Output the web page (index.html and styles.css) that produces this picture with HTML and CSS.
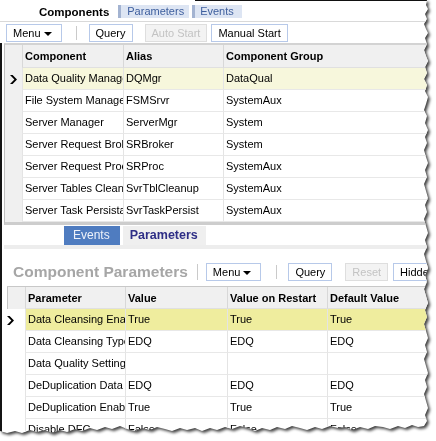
FILE: index.html
```html
<!DOCTYPE html>
<html>
<head>
<meta charset="utf-8">
<link rel="stylesheet" href="styles.css">
</head>
<body>
<div class="wrap">
<div class="sheet">
  <div class="tabs">
    <span class="tab-active">Components</span>
    <span class="tab">Parameters</span>
    <span class="tab tab-ev">Events</span>
  </div>
  <div class="toolbar">
    <span class="btn btn-menu">Menu<i class="caret"></i></span>
    <span class="sep"></span>
    <span class="btn btn-q">Query</span>
    <span class="btn btn-off btn-auto">Auto Start</span>
    <span class="btn">Manual Start</span>
  </div>
  <div class="lower">
    <div class="grid grid1">
      <div class="rh rh-head"></div>
      <div class="c h">Component</div>
      <div class="c h">Alias</div>
      <div class="c h">Component Group</div>

      <div class="rh"><svg class="chev" width="7" height="9" viewBox="0 0 7 9"><polygon points="0,0 2.6,0 7,4.5 2.6,9 0,9 4.4,4.5" fill="#000"/></svg></div>
      <div class="c sel1">Data Quality Manager</div>
      <div class="c sel1">DQMgr</div>
      <div class="c sel1">DataQual</div>

      <div class="rh"></div><div class="c">File System Manager</div><div class="c">FSMSrvr</div><div class="c">SystemAux</div>
      <div class="rh"></div><div class="c">Server Manager</div><div class="c">ServerMgr</div><div class="c">System</div>
      <div class="rh"></div><div class="c">Server Request Broker</div><div class="c">SRBroker</div><div class="c">System</div>
      <div class="rh"></div><div class="c">Server Request Processor</div><div class="c">SRProc</div><div class="c">SystemAux</div>
      <div class="rh"></div><div class="c">Server Tables Cleanup</div><div class="c">SvrTblCleanup</div><div class="c">SystemAux</div>
      <div class="rh"></div><div class="c">Server Task Persistance</div><div class="c">SvrTaskPersist</div><div class="c">SystemAux</div>
    </div>

    <div class="subtabs">
      <span class="st st-ev">Events</span>
      <span class="st st-par">Parameters</span>
    </div>

    <div class="ptitle">
      <span class="ttl">Component Parameters</span>
      <span class="sep sep-t"></span>
      <span class="btn btn-menu">Menu<i class="caret"></i></span>
      <span class="sep sep-2"></span>
      <span class="btn btn-q2">Query</span>
      <span class="btn btn-off btn-reset">Reset</span>
      <span class="btn">Hidden</span>
    </div>

    <div class="grid grid2">
      <div class="rh2 rh2-head"></div>
      <div class="c h">Parameter</div>
      <div class="c h">Value</div>
      <div class="c h">Value on Restart</div>
      <div class="c h">Default Value</div>

      <div class="rh2"><svg class="chev" width="7" height="9" viewBox="0 0 7 9"><polygon points="0,0 2.6,0 7,4.5 2.6,9 0,9 4.4,4.5" fill="#000"/></svg></div>
      <div class="c sel2">Data Cleansing Enabled</div>
      <div class="c sel2">True</div>
      <div class="c sel2">True</div>
      <div class="c sel2">True</div>

      <div class="rh2"></div><div class="c">Data Cleansing Type</div><div class="c">EDQ</div><div class="c">EDQ</div><div class="c">EDQ</div>
      <div class="rh2"></div><div class="c">Data Quality Settings</div><div class="c"></div><div class="c"></div><div class="c"></div>
      <div class="rh2"></div><div class="c">DeDuplication Data Type</div><div class="c">EDQ</div><div class="c">EDQ</div><div class="c">EDQ</div>
      <div class="rh2"></div><div class="c">DeDuplication Enabled</div><div class="c">True</div><div class="c">True</div><div class="c">True</div>
      <div class="rh2"></div><div class="c">Disable DFC</div><div class="c">False</div><div class="c">False</div><div class="c">False</div>
    </div>
  </div>
</div>
</div>
</body>
</html>
```
FILE: styles.css
```css
html, body {
  margin: 0;
  padding: 0;
  background: #fff;
}
body {
  font-family: "Liberation Sans", Arial, sans-serif;
  font-size: 11px;
  color: #000;
}
.wrap {
  width: 436px;
  height: 441px;
  filter: drop-shadow(2px 2px 1.5px rgba(0, 0, 0, 0.75));
}
.sheet {
  width: 436px;
  height: 441px;
  background: #fff;
  overflow: hidden;
  clip-path: polygon(0 0, 427px 0, 426px 5px, 428px 9px, 425px 14px, 427px 19px, 424px 24px, 426px 29px, 428px 33px, 425px 38px, 427px 44px, 424px 50px, 426px 56px, 428px 61px, 425px 67px, 427px 73px, 424px 79px, 427px 85px, 425px 91px, 428px 97px, 426px 104px, 424px 110px, 427px 116px, 425px 123px, 428px 130px, 425px 137px, 427px 143px, 424px 150px, 426px 157px, 428px 163px, 425px 170px, 427px 177px, 424px 184px, 426px 191px, 428px 198px, 425px 205px, 427px 212px, 424px 219px, 426px 226px, 428px 233px, 425px 240px, 427px 247px, 424px 254px, 426px 261px, 428px 268px, 425px 275px, 427px 282px, 424px 289px, 426px 296px, 428px 303px, 425px 310px, 427px 317px, 424px 324px, 426px 331px, 428px 338px, 425px 345px, 427px 352px, 424px 359px, 426px 366px, 428px 373px, 425px 380px, 427px 387px, 424px 394px, 426px 401px, 428px 408px, 425px 415px, 427px 421px, 424px 426px, 418px 427px, 412px 425px, 405px 428px, 398px 426px, 390px 429px, 383px 427px, 375px 426px, 368px 429px, 360px 427px, 352px 430px, 345px 427px, 338px 428px, 330px 426px, 322px 429px, 315px 427px, 307px 430px, 300px 428px, 292px 426px, 285px 429px, 277px 427px, 270px 430px, 262px 428px, 255px 431px, 248px 428px, 240px 426px, 232px 429px, 225px 427px, 217px 430px, 210px 428px, 202px 431px, 195px 428px, 187px 430px, 180px 428px, 172px 431px, 165px 429px, 157px 427px, 150px 430px, 142px 428px, 135px 431px, 127px 429px, 120px 426px, 112px 429px, 105px 427px, 97px 430px, 90px 428px, 82px 431px, 75px 429px, 67px 432px, 60px 430px, 52px 433px, 45px 430px, 37px 432px, 30px 430px, 22px 433px, 15px 431px, 7px 433px, 0 431px);
}

/* top tabs */
.tabs {
  height: 21px;
  border-bottom: 1px solid #d9d9d9;
  display: flex;
  align-items: flex-start;
  padding-left: 39px;
  background: linear-gradient(#111, #111) 195px 0 / 100% 1px no-repeat;
}
.tab-active {
  font-weight: bold;
  font-size: 11.5px;
  line-height: 13px;
  margin-top: 6px;
  margin-right: 9px;
}
.tab {
  margin-top: 5px;
  height: 13px;
  line-height: 13px;
  border-left: 3px solid #a3b3d1;
  background: #dde5f3;
  color: #3e5f9e;
  padding: 0 5px 0 6px;
  margin-right: 3px;
}
.tab-ev {
  padding: 0 8px 0 5px;
}

/* toolbars */
.toolbar {
  height: 21px;
  box-sizing: border-box;
  padding: 2px 0 0 6px;
  display: flex;
  align-items: flex-start;
}
.btn {
  display: inline-flex;
  align-items: center;
  height: 18px;
  box-sizing: border-box;
  border: 1px solid #b7c9e9;
  background: #fff;
  padding: 0 6px;
  font-size: 11px;
  white-space: nowrap;
  flex: none;
}
.btn-menu {
  padding: 0 9px 0 6px;
}
.caret {
  display: inline-block;
  width: 0;
  height: 0;
  border-left: 4px solid transparent;
  border-right: 4px solid transparent;
  border-top: 4px solid #000;
  margin-left: 3px;
  margin-top: 1px;
}
.btn-off {
  background: #f3f3f3;
  border-color: #dedede;
  color: #c3c3c3;
}
.sep {
  width: 1px;
  height: 14px;
  background: #cacaca;
  margin: 2px 12px 0 14px;
  flex: none;
}
.btn-q {
  margin-right: 12px;
}
.btn-auto {
  margin-right: 4px;
}

/* lower part */
.lower {
  border-left: 2px solid #141414;
  padding-left: 2px;
  height: 420px;
}
.grid {
  display: grid;
}
.grid1 {
  border-left: 1px solid #bfbfbf;
  border-top: 2px solid #d3d3d3;
  border-bottom: 3px solid #cdcdcd;
  grid-template-columns: 17px 101px 100px 1fr;
  grid-template-rows: 23px repeat(7, 22px);
}
.c {
  box-sizing: border-box;
  border-left: 1px solid #e4e4e4;
  border-bottom: 1px solid #e8e8e8;
  padding-left: 2px;
  line-height: 21px;
  overflow: hidden;
  white-space: nowrap;
}
.h {
  background: #f0f0f0;
  font-weight: bold;
  border-left-color: #d8d8d8;
  border-bottom-color: #e0e0e0;
  line-height: 22px;
}
.rh {
  background: #f0f0f0;
  display: flex;
  align-items: center;
}
.chev {
  margin-left: 5px;
}
.sel1 {
  background: #f7f7dc;
}
.sel2 {
  background: #efed9e;
}

/* sub tabs */
.subtabs {
  display: flex;
  align-items: flex-end;
  padding-left: 60px;
  margin-top: 1px;
  height: 19px;
  border-bottom: 4px solid #ededed;
}
.st {
  height: 19px;
  line-height: 19px;
  font-size: 12px;
  white-space: nowrap;
}
.st-ev {
  background: #4f7cc0;
  color: #eef2fa;
  padding: 0 10px 0 9px;
  margin-right: 3px;
}
.st-par {
  background: #efefef;
  color: #2e2e86;
  font-weight: bold;
  font-size: 12.5px;
  padding: 0 8px 0 7px;
}

/* parameters title */
.ptitle {
  display: flex;
  align-items: center;
  height: 18px;
  margin-top: 14px;
  padding-left: 9px;
}
.ttl {
  font-weight: bold;
  font-size: 15.5px;
  color: #a6a6a6;
  white-space: nowrap;
  line-height: 18px;
}
.sep-t {
  margin: 0 8px 0 9px;
  height: 16px;
}
.sep-2 {
  margin: 0 11px 0 15px;
}
.btn-q2 {
  margin-right: 13px;
}
.btn-reset {
  margin-right: 5px;
}

/* table 2 */
.grid2 {
  margin-top: 5px;
  margin-left: 3px;
  border-top: 1px solid #c8c8c8;
  grid-template-columns: 18px 100px 102px 100px 1fr;
  grid-template-rows: 22px repeat(6, 22px);
}
.rh2 {
  display: flex;
  align-items: center;
}
.rh2-head {
  background: #f0f0f0;
  border-left: 1px solid #c4c4c4;
}
.rh2 .chev {
  margin-left: 0;
}
```
